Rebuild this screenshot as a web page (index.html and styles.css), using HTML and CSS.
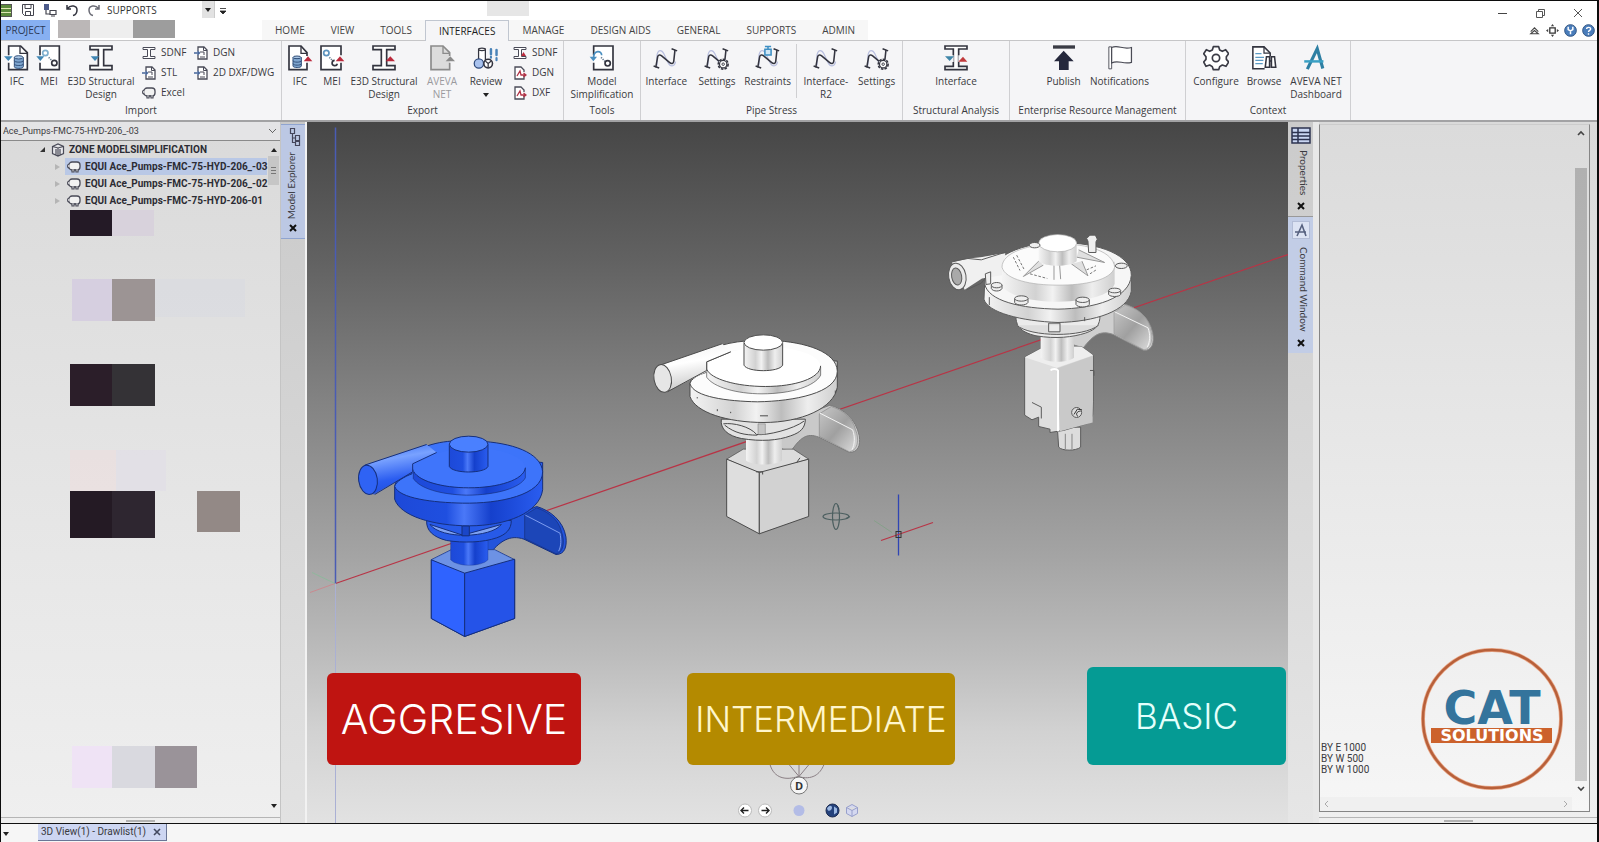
FILE: index.html
```html
<!DOCTYPE html>
<html lang="en">
<head>
<meta charset="utf-8">
<title>3D View(1) - Drawlist(1)</title>
<link rel="stylesheet" href="styles.css">
</head>
<body>
<svg class="sprite" aria-hidden="true">
  <defs>
    <symbol id="i-ifc-in" viewBox="0 0 78 84"><path d="M14 34V6h36l20 20v51H14V56" fill="#fff" stroke="#33343f" stroke-width="5"/><path d="M48 6v22h22" fill="none" stroke="#33343f" stroke-width="4"/><path d="M0 37h26L13 51z" fill="#3f86b4"/><path d="M31 40v28c0 7 27 7 27 0V40" fill="#7fa6cf" stroke="#33507a" stroke-width="3"/><ellipse cx="44" cy="40" rx="13" ry="5" fill="#a9c6e4" stroke="#33507a" stroke-width="3"/><path d="M31 50c0 6 27 6 27 0M31 60c0 6 27 6 27 0" fill="none" stroke="#33507a" stroke-width="3"/></symbol>
    <symbol id="i-mei-in" viewBox="0 0 78 84"><path d="M12 34V6h58v71H12V56" fill="#fff" stroke="#33343f" stroke-width="5"/><path d="M1 37h24L13 51z" fill="#3f86b4"/><circle cx="28" cy="27" r="8" fill="none" stroke="#7fb0cf" stroke-width="5"/><circle cx="55" cy="57" r="8" fill="none" stroke="#33343f" stroke-width="5"/><path d="M38 40l10 10" stroke="#6a7f93" stroke-width="5" stroke-dasharray="4 3"/></symbol>
    <symbol id="i-beam-in" viewBox="0 0 78 84"><path d="M6 6h66v11H47v48h25v12H6V65h25V17H6z" fill="#fff" stroke="#33343f" stroke-width="5"/><path d="M8 37h26L21 51z" fill="#3f86b4"/></symbol>
    <symbol id="i-ifc-out" viewBox="0 0 78 84"><path d="M60 56v21H6V6h36l18 20v10" fill="#fff" stroke="#33343f" stroke-width="5"/><path d="M42 6v22h18" fill="none" stroke="#33343f" stroke-width="4"/><path d="M50 52h26L63 37z" fill="#bb2a3c"/><path d="M18 40v26c0 6 25 6 25 0V40" fill="#7fa6cf" stroke="#33507a" stroke-width="3"/><ellipse cx="30" cy="40" rx="12" ry="4" fill="#a9c6e4" stroke="#33507a" stroke-width="3"/><path d="M18 50c0 6 25 6 25 0M18 59c0 6 25 6 25 0" fill="none" stroke="#33507a" stroke-width="3"/></symbol>
    <symbol id="i-mei-out" viewBox="0 0 78 84"><path d="M66 56v21H6V6h60v28" fill="#fff" stroke="#33343f" stroke-width="5"/><circle cx="22" cy="27" r="8" fill="none" stroke="#5e94bf" stroke-width="5"/><path d="M31 40l8 8" stroke="#6a7f93" stroke-width="5" stroke-dasharray="4 3"/><path d="M55 59a8 8 0 1 1-8-10" fill="none" stroke="#33343f" stroke-width="5"/><path d="M50 52h26L63 37z" fill="#bb2a3c"/></symbol>
    <symbol id="i-beam-out" viewBox="0 0 78 84"><path d="M6 6h66v11H47v48h25v12H6V65h25V17H6z" fill="#fff" stroke="#33343f" stroke-width="5"/><path d="M44 52h28L58 37z" fill="#bb2a3c"/></symbol>
    <symbol id="i-doc-off" viewBox="0 0 78 84"><path d="M62 56v21H6V6h36l20 20v10" fill="#dcdcdc" stroke="#8b8b8b" stroke-width="5"/><path d="M42 6v22h20" fill="none" stroke="#8b8b8b" stroke-width="4"/><path d="M50 52h28L64 37z" fill="#8b8b8b"/></symbol>
    <symbol id="i-review" viewBox="0 0 84 84"><path d="M18 54V14h22v40" fill="#fff" stroke="#33343f" stroke-width="4"/><ellipse cx="29" cy="14" rx="11" ry="4" fill="#fff" stroke="#33343f" stroke-width="4"/><circle cx="19" cy="60" r="15" fill="#a9c2ee" stroke="#2f4a7c" stroke-width="4"/><circle cx="49" cy="60" r="14" fill="#fff" stroke="#33343f" stroke-width="5"/><path d="M49 60l-9-8M49 60l10-8M49 60v13" stroke="#33343f" stroke-width="4"/><path d="M58 14v16M76 16v16" stroke="#4a83b8" stroke-width="8" stroke-linecap="round"/><path d="M58 38v3M76 42v7" stroke="#4a83b8" stroke-width="7" stroke-linecap="round"/></symbol>
    <symbol id="i-simplify" viewBox="0 0 78 84"><path d="M14 34V6h58v71H14V56" fill="#fff" stroke="#33343f" stroke-width="5"/><path d="M14 40c0-22 24-22 24-6" fill="none" stroke="#4a8fc0" stroke-width="5"/><path d="M2 38h22L13 52z" fill="#4a8fc0"/><path d="M36 40l12 12" stroke="#6a7f93" stroke-width="5" stroke-dasharray="4 3"/><circle cx="56" cy="58" r="8" fill="none" stroke="#33343f" stroke-width="5"/></symbol>
    <symbol id="i-pipe" viewBox="0 0 84 84"><path d="M13 66V32c4-20 16-16 22-4l12 26c8 18 22 18 26 0" fill="none" stroke="#b9bfe0" stroke-width="4"/><path d="M9 72l6-34c2-7 8-7 13-3l26 22c6 5 12 4 13-4l4-37" fill="none" stroke="#33343f" stroke-width="5"/><path d="M2 68l18 6M60 12l18 7" stroke="#33343f" stroke-width="5"/></symbol>
    <symbol id="i-pipe-gear" viewBox="0 0 84 84"><use href="#i-pipe"/><circle cx="62" cy="62" r="16" fill="#f4f4f6" stroke="#33343f" stroke-width="5" stroke-dasharray="8 4"/><circle cx="62" cy="62" r="12" fill="#fff" stroke="#33343f" stroke-width="4"/><circle cx="62" cy="62" r="4" fill="none" stroke="#33343f" stroke-width="3"/></symbol>
    <symbol id="i-restraint" viewBox="0 0 84 84"><use href="#i-pipe"/><path d="M32 5h20M42 5v9M32 14h20v18H32z" fill="#cfe7f7" stroke="#3d8fc4" stroke-width="5"/></symbol>
    <symbol id="i-beam-both" viewBox="0 0 78 84"><path d="M6 6h66v9H47v52h25v10H6V67h25V15H6z" fill="#fff" stroke="#33343f" stroke-width="5"/><path d="M2 34h30v20H2zM46 34h32v20H46z" fill="#f4f4f6"/><path d="M6 37h27L20 51z" fill="#3f86a8"/><path d="M46 53h27L60 38z" fill="#c03a3c"/></symbol>
    <symbol id="i-publish" viewBox="0 0 78 84"><path d="M6 4h66v10H6z" fill="#3a3b45"/><path d="M38 20l30 32H53v26H24V52H9z" fill="#25283c"/></symbol>
    <symbol id="i-flag" viewBox="0 0 84 84"><path d="M6 6h9v71H6z" fill="#fff" stroke="#4a4b55" stroke-width="3"/><path d="M15 8c22-10 34 8 64 0v48c-28 8-42-10-64 2z" fill="#fff" stroke="#4a4b55" stroke-width="4"/></symbol>
    <symbol id="i-gear" viewBox="0 0 78 84"><path d="M31 8h16l3 10 8 4 10-5 9 12-7 9v8l7 8-8 13-11-4-8 5-3 9H31l-3-9-8-5-11 4-7-13 7-8v-8l-7-9 8-12 10 5 8-4z" fill="#fff" stroke="#3a3b45" stroke-width="5" stroke-linejoin="round"/><circle cx="39" cy="42" r="11" fill="#fff" stroke="#3a3b45" stroke-width="5"/></symbol>
    <symbol id="i-browse" viewBox="0 0 84 84"><path d="M44 77H6V6h36l20 20v10" fill="#fff" stroke="#33343f" stroke-width="5"/><path d="M42 6v20h20" fill="none" stroke="#33343f" stroke-width="4"/><path d="M14 28h20M14 40h28M14 50h26M14 60h24" stroke="#5b9ac4" stroke-width="4"/><path d="M46 72l4-34h10v34zM80 72l-4-34H66v34zM60 52h6" fill="#fff" stroke="#33343f" stroke-width="5"/></symbol>
    <symbol id="i-aveva" viewBox="0 0 84 84"><path d="M14 78L46 12l18 64" fill="none" stroke="#2e7fa3" stroke-width="10"/><path d="M4 53h62" stroke="#3aa0c4" stroke-width="8"/></symbol>
    <symbol id="i-s-beam" viewBox="0 0 14 14"><path d="M1 1.500h12v2H8.500v7H13v2H1v-2h4.500v-7H1z" fill="#fff" stroke="#4a4b58"/></symbol>
    <symbol id="i-s-beam-out" viewBox="0 0 14 14"><use href="#i-s-beam"/><path d="M8 10h5l-2.500-4z" fill="#bb2a3c"/></symbol>
    <symbol id="i-s-doc" viewBox="0 0 14 14"><path d="M4 5V1h6l3 3v9H4V9" fill="#fff" stroke="#4a4b58" stroke-width="1.300"/><path d="M9.500 1v3.500H13M6 11h5M6 6h4v3" fill="none" stroke="#4a4b58"/><path d="M0 7h5M3.500 5l2 2-2 2" fill="none" stroke="#46659a" stroke-width="1.300"/></symbol>
    <symbol id="i-s-doc-out" viewBox="0 0 14 14"><path d="M11 9v4H2V1h6l3 3v2" fill="#fff" stroke="#4a4b58" stroke-width="1.300"/><path d="M4 10l3-5 1 4h5M10.500 7l2.500 2-2.500 2" fill="none" stroke="#b23448" stroke-width="1.300"/></symbol>
    <symbol id="i-equip" viewBox="0 0 14 14"><rect x="2" y="2" width="11" height="8" rx="3" fill="#f2f2f2" stroke="#4a4b58" stroke-width="1.300"/><path d="M2.500 4C0 4 0 8 2.500 8M5 9v3h2V9M9 9v3h2V9" fill="#fff" stroke="#4a4b58" stroke-width="1.200"/></symbol>
    <symbol id="i-zone" viewBox="0 0 14 14"><path d="M1.500 3.500L7 1l5.500 2.500v7L7 13l-5.500-2.500zM1.500 3.500L7 5l5.500-1.500M5 6v6M7 5v8M9 6v6" fill="#e8e8ec" stroke="#4a4b58" stroke-width="1.200"/></symbol>
  </defs>
</svg>

<div class="app">
  <header class="titlebar">
    <span class="app-mark"></span>
    <div class="quick">
      <button class="tool" aria-label="Save"><svg viewBox="0 0 14 14"><path d="M1.500 1.500h11v11h-9l-2-2zM4 1.500v4h6v-4M4.500 12.500v-4h5v4" fill="#fff" stroke="#44454f"/></svg></button>
      <button class="tool" aria-label="Get work"><svg viewBox="0 0 14 14"><path d="M1 1h5v6H1z" fill="#4c5a8a" /><path d="M3 7v4h4M7 7.500h6v4H7zM8 13h4" fill="none" stroke="#44454f" stroke-width="1.200"/></svg></button>
      <button class="tool" aria-label="Undo"><svg viewBox="0 0 14 14"><path d="M2 2v4h4M2.500 5.500C6 1 12 3 12 7c0 3-2 5-4 5.500" fill="none" stroke="#33343f" stroke-width="1.500"/></svg></button>
      <button class="tool" aria-label="Redo"><svg viewBox="0 0 14 14"><path d="M12 2v4H8M11.500 5.500C8 1 2 3 2 7c0 3 2 5 4 5.500" fill="none" stroke="#6a6b75" stroke-width="1.500"/></svg></button>
    </div>
    <label class="module-box"><select class="module" aria-label="Module"><option>SUPPORTS</option></select><i class="down"></i></label>
    <button class="customise" aria-label="Customise toolbar"><svg viewBox="0 0 8 8"><path d="M1 1.500h6M1 4h6L4 7z" fill="#222" stroke="#222" stroke-width=".8"/></svg></button>
    <span class="title-block"></span>
    <div class="window-buttons">
      <button aria-label="Minimise"><svg viewBox="0 0 12 12"><path d="M2 6.500h9" stroke="#444"/></svg></button>
      <button aria-label="Restore"><svg viewBox="0 0 12 12"><path d="M2.500 4.500h6v6h-6zM4.500 4V2.500h6v6H9" fill="none" stroke="#555"/></svg></button>
      <button aria-label="Close"><svg viewBox="0 0 12 12"><path d="M2 2l8 8M10 2l-8 8" stroke="#555"/></svg></button>
    </div>
  </header>

  <nav class="tabs">
    <button class="tab project">PROJECT</button>
    <div class="tab-blocks"><span class="tb1"></span><span class="tb2"></span><span class="tb3"></span></div>
    <div class="tab-list">
      <button class="tab">HOME</button>
      <button class="tab">VIEW</button>
      <button class="tab">TOOLS</button>
      <button class="tab active">INTERFACES</button>
      <button class="tab">MANAGE</button>
      <button class="tab">DESIGN AIDS</button>
      <button class="tab">GENERAL</button>
      <button class="tab">SUPPORTS</button>
      <button class="tab">ADMIN</button>
    </div>
    <div class="tab-tools">
      <button aria-label="Collapse ribbon"><svg viewBox="0 0 12 12"><path d="M2.500 7L6 3.500 9.500 7M2.500 9h7L6 6z" fill="none" stroke="#444"/></svg></button>
      <button aria-label="Full screen"><svg viewBox="0 0 12 12"><path d="M3.500 3.500h5v5h-5z" fill="none" stroke="#333" stroke-width="1.200"/><path d="M6 0l1.500 2h-3zM6 12l1.500-2h-3zM0 6l2-1.500v3zM12 6l-2-1.500v3z" fill="#444"/></svg></button>
      <button aria-label="Options"><svg viewBox="0 0 14 14"><circle cx="7" cy="7" r="6.300" fill="#4a7dbb" stroke="#2e5280"/><path d="M4.500 3v3L7 7.500 9.500 6V3M7 7v4" fill="none" stroke="#fff" stroke-width="1.600"/></svg></button>
      <button aria-label="Help"><svg viewBox="0 0 14 14"><circle cx="7" cy="7" r="6.300" fill="#4a7dbb" stroke="#2e5280"/><path d="M5 5.500C5 3 9.500 3 9.300 5.500 9 7 7 6.800 7 8.500M7 10v1.500" fill="none" stroke="#fff" stroke-width="1.500"/></svg></button>
    </div>
  </nav>

  <section class="ribbon">
    <div class="group g-import">
      <div class="items">
        <button class="big"><svg><use href="#i-ifc-in"/></svg>IFC</button>
        <button class="big"><svg><use href="#i-mei-in"/></svg>MEI</button>
        <button class="big wide"><svg><use href="#i-beam-in"/></svg>E3D Structural<br>Design</button>
        <div class="smalls">
          <button class="small"><svg><use href="#i-s-beam"/></svg>SDNF</button>
          <button class="small"><svg><use href="#i-s-doc"/></svg>STL</button>
          <button class="small"><svg><use href="#i-equip"/></svg>Excel</button>
        </div>
        <div class="smalls">
          <button class="small"><svg><use href="#i-s-doc"/></svg>DGN</button>
          <button class="small"><svg><use href="#i-s-doc"/></svg>2D DXF/DWG</button>
        </div>
      </div>
      <p class="caption">Import</p>
    </div>
    <div class="group g-export">
      <div class="items">
        <button class="big"><svg><use href="#i-ifc-out"/></svg>IFC</button>
        <button class="big"><svg><use href="#i-mei-out"/></svg>MEI</button>
        <button class="big wide"><svg><use href="#i-beam-out"/></svg>E3D Structural<br>Design</button>
        <button class="big mid" disabled><svg><use href="#i-doc-off"/></svg>AVEVA<br>NET</button>
        <button class="big mid"><svg><use href="#i-review"/></svg>Review<i class="arrow"></i></button>
        <div class="smalls">
          <button class="small"><svg><use href="#i-s-beam-out"/></svg>SDNF</button>
          <button class="small"><svg><use href="#i-s-doc-out"/></svg>DGN</button>
          <button class="small"><svg><use href="#i-s-doc-out"/></svg>DXF</button>
        </div>
      </div>
      <p class="caption">Export</p>
    </div>
    <div class="group g-tools">
      <div class="items centred">
        <button class="big wide"><svg><use href="#i-simplify"/></svg>Model<br>Simplification</button>
      </div>
      <p class="caption">Tools</p>
    </div>
    <div class="group g-pipe">
      <div class="items">
        <button class="big mid"><svg><use href="#i-pipe"/></svg>Interface</button>
        <button class="big mid"><svg><use href="#i-pipe-gear"/></svg>Settings</button>
        <button class="big mid"><svg><use href="#i-restraint"/></svg>Restraints</button>
        <span class="rule"></span>
        <button class="big mid"><svg><use href="#i-pipe"/></svg>Interface-<br>R2</button>
        <button class="big mid"><svg><use href="#i-pipe-gear"/></svg>Settings</button>
      </div>
      <p class="caption">Pipe Stress</p>
    </div>
    <div class="group g-struct">
      <div class="items centred">
        <button class="big mid"><svg><use href="#i-beam-both"/></svg>Interface</button>
      </div>
      <p class="caption">Structural Analysis</p>
    </div>
    <div class="group g-erm">
      <div class="items centred">
        <button class="big roomy"><svg><use href="#i-publish"/></svg>Publish</button>
        <button class="big broad"><svg><use href="#i-flag"/></svg>Notifications</button>
      </div>
      <p class="caption">Enterprise Resource Management</p>
    </div>
    <div class="group g-context">
      <div class="items centred">
        <button class="big roomy"><svg><use href="#i-gear"/></svg>Configure</button>
        <button class="big mid"><svg><use href="#i-browse"/></svg>Browse</button>
        <button class="big broad"><svg><use href="#i-aveva"/></svg>AVEVA NET<br>Dashboard</button>
      </div>
      <p class="caption">Context</p>
    </div>
  </section>

  <main class="body">
    <aside class="explorer">
      <select class="address" aria-label="Current element"><option>Ace_Pumps-FMC-75-HYD-206_-03</option></select>
      <div class="tree-area">
        <svg class="mosaic" aria-hidden="true">
          <rect x="69" y="69" width="42" height="26" fill="#241a26"/><rect x="111" y="69" width="42" height="26" fill="#d8d2dc"/>
          <rect x="71" y="138" width="40" height="42" fill="#d6cfe0"/><rect x="111" y="138" width="43" height="42" fill="#9c9494"/><rect x="154" y="138" width="90" height="38" fill="#d9dae1" opacity=".6"/>
          <rect x="69" y="223" width="42" height="42" fill="#2b1e29"/><rect x="111" y="223" width="43" height="42" fill="#343236"/>
          <rect x="69" y="309" width="46" height="41" fill="#ecdedd" opacity=".6"/><rect x="115" y="309" width="50" height="41" fill="#e0dce8" opacity=".5"/>
          <rect x="69" y="350" width="42" height="47" fill="#241a24"/><rect x="111" y="350" width="43" height="47" fill="#2e2630"/><rect x="196" y="350" width="43" height="41" fill="#938986"/>
          <rect x="71" y="605" width="40" height="42" fill="#efe3f5"/><rect x="111" y="605" width="43" height="42" fill="#d9d9df"/><rect x="154" y="605" width="42" height="42" fill="#9a9399"/>
        </svg>
        <ul class="tree">
          <li class="zone"><span class="open"></span><svg><use href="#i-zone"/></svg><span>ZONE MODELSIMPLIFICATION</span></li>
          <li class="selected"><span class="shut"></span><svg><use href="#i-equip"/></svg><span>EQUI Ace_Pumps-FMC-75-HYD-206_-03</span></li>
          <li><span class="shut"></span><svg><use href="#i-equip"/></svg><span>EQUI Ace_Pumps-FMC-75-HYD-206_-02</span></li>
          <li><span class="shut"></span><svg><use href="#i-equip"/></svg><span>EQUI Ace_Pumps-FMC-75-HYD-206-01</span></li>
        </ul>
        <div class="tree-scroll"><i class="up"></i><span class="thumb"></span><i class="down"></i></div>
      </div>
      <div class="grip"><span></span></div>
    </aside>

    <div class="strip left">
      <div class="side-tab explorer-tab">
        <svg class="tab-icon" viewBox="0 0 12 20"><path d="M1.500 1.500h4v5h-4zM3.500 6.500v9h3M3.500 11h3M6.500 8.500h4v5h-4zM6.500 14.500h4v4h-4z" fill="none" stroke="#44455a" stroke-width="1.200"/></svg>
        <span class="up-text">Model Explorer</span>
        <button class="x" aria-label="Close Model Explorer"><svg viewBox="0 0 8 8"><path d="M1 1l6 6M7 1L1 7" stroke="#111" stroke-width="2"/></svg></button>
      </div>
    </div>

    <section class="viewport">
      <svg class="scene" viewBox="307 121 981 702" preserveAspectRatio="xMidYMid slice" role="img" aria-label="Three pump models">
        <defs>
          <linearGradient id="bg" x1="0" y1="0" x2="0" y2="1"><stop offset="0" stop-color="#464646"/><stop offset=".2" stop-color="#626262"/><stop offset=".4" stop-color="#838383"/><stop offset=".62" stop-color="#a4a4a4"/><stop offset=".76" stop-color="#bcbcbc"/><stop offset=".87" stop-color="#d2d2d2"/><stop offset="1" stop-color="#e2e2e2"/></linearGradient>
          <linearGradient id="b-side"><stop offset="0" stop-color="#1d49d8"/><stop offset=".35" stop-color="#1f4fe0"/><stop offset=".47" stop-color="#4a78f8"/><stop offset=".65" stop-color="#1540cc"/><stop offset="1" stop-color="#2a5df0"/></linearGradient>
          <linearGradient id="b-pipe" x1="0" y1="0" x2=".25" y2="1"><stop offset="0" stop-color="#2f66f0"/><stop offset=".35" stop-color="#79a2ff"/><stop offset=".75" stop-color="#2a5cf0"/><stop offset="1" stop-color="#1f4fe0"/></linearGradient>
          <linearGradient id="w-side"><stop offset="0" stop-color="#f4f4f4"/><stop offset=".3" stop-color="#d2d2d2"/><stop offset=".45" stop-color="#f2f2f2"/><stop offset=".62" stop-color="#bdbdbd"/><stop offset=".8" stop-color="#eee"/><stop offset="1" stop-color="#cfcfcf"/></linearGradient>
          <linearGradient id="w-pipe" x1="0" y1="0" x2=".25" y2="1"><stop offset="0" stop-color="#f0f0f0"/><stop offset=".45" stop-color="#fff"/><stop offset="1" stop-color="#c8c8c8"/></linearGradient>
          <linearGradient id="w-plate" x1="0" y1="0" x2="1" y2="1"><stop offset="0" stop-color="#c8c8c8"/><stop offset=".5" stop-color="#a0a0a0"/><stop offset="1" stop-color="#dedede"/></linearGradient>
        </defs>
        <rect x="307" y="121" width="981" height="702" fill="url(#bg)"/>
        <path d="M335.500 583L1288 254" stroke="#b83446" stroke-width="1.200"/>
        <path d="M310 592l25-9" stroke="#c98a90"/><path d="M312 572l23 11" stroke="#8fb89c"/>
        <path d="M335.500 127V583" stroke="#4a5cb4" stroke-width="1.500"/><path d="M335.500 583V823" stroke="#aab0d4"/>

        <g transform="translate(320 400) scale(.3333)" stroke="#152f7c" stroke-width="3" stroke-linejoin="round">
          <path d="M500 380L650 318C690 330 730 360 738 410C741 440 734 462 708 462L612 416C570 402 540 420 504 466L480 440Z" fill="#2354dc"/>
          <path d="M614 344L650 322C686 334 716 358 724 392C736 424 730 458 708 460L614 414Z" fill="#1c46b8" stroke-width="2"/>
          <path d="M616 344l104 54c4 20 4 38-4 54" fill="none" stroke="#7d9df0"/>
          <path d="M334 478l60-30h130l60 30v176l-150 54-100-54z" fill="#2b5cf2"/>
          <path d="M334 478l60-30h130l60 30-150 48z" fill="#6d92e4" stroke-width="1"/>
          <path d="M334 478l100 40v190l-100-54z" fill="#2f63ff"/><path d="M434 518l150-42v178l-150 54z" fill="#2553e8"/>
          <path d="M392 420h112v58c-20 22-92 22-112 0z" fill="url(#b-side)" stroke-width="1"/>
          <path d="M320 360c-2 30 20 50 60 60 50 8 110 6 150-8 28-10 44-25 44-52z" fill="#275ae8"/>
          <path d="M330 372l98 32 116-32c-30 40-180 46-214 0z" fill="#7fa2f2"/><path d="M426 376h22v30h-22z" fill="#1a46c8"/>
          <path d="M224 258c2-14 10-24 22-32l160-60 262 20v82c-10 70-110 108-220 108-110 0-208-30-224-80z" fill="url(#b-side)"/>
          <path d="M224 258c2-14 30-30 52-38l-2-60c60-40 130-42 200-38 100 4 190 34 194 92 0 70-130 96-240 94-90-2-190-14-204-50z" fill="#3d74fa"/>
          <path d="M280 206v28c20 30 80 48 160 50 90 0 160-22 176-52v-30z" fill="url(#b-side)" stroke-width="2"/>
          <path d="M278 206c2-30 30-42 70-46l60-16c100-10 206 16 208 58-4 40-90 60-170 60-90-2-160-26-168-56z" fill="#3f75fb" stroke="none"/>
          <path d="M278 206c10 36 90 56 168 56 90 0 166-24 170-60" fill="none"/>
          <path d="M134 194l186-62 30 24-70 34v24l-120 68z" fill="url(#b-pipe)" stroke="none"/><path d="M134 194l186-62M350 156l-72 34v24l-114 68" fill="none"/>
          <ellipse cx="144" cy="238" rx="28" ry="44" fill="#2f63f4" transform="rotate(-8 144 238)"/>
          <path d="M388 132v66c10 22 106 22 116 0v-66z" fill="url(#b-side)"/><ellipse cx="446" cy="131" rx="58" ry="24" fill="#4a80ff"/>
        </g>

        <g transform="translate(630 310) scale(.3333)" stroke="#4a4a4a" stroke-width="3" stroke-linejoin="round">
          <path d="M450 340L600 284C640 294 678 326 688 376C692 406 684 426 658 426L566 380C530 366 510 382 482 424L440 410Z" fill="#c9c9c9" stroke="#7a7a7a"/>
          <path d="M568 310L604 288C640 300 668 322 676 356C690 388 682 422 658 424L568 378Z" fill="url(#w-plate)" stroke="#888" stroke-width="2"/>
          <path d="M570 308l98 50c8 22 6 44-2 60" fill="none" stroke="#f4f4f4"/>
          <path d="M290 446l50-30h150l46 30-146 44z" fill="#dcdcdc" stroke-width="2"/>
          <path d="M290 446l98 40v184l-98-52z" fill="#dedede"/><path d="M388 486l148-40v172l-148 52z" fill="#d2d2d2"/>
          <path d="M378 484h20v8M500 456l10-14" fill="none"/>
          <path d="M348 380h108v70c-20 16-88 16-108 0z" fill="url(#w-side)" stroke="none"/>
          <path d="M274 326c-4 30 20 50 60 58 60 10 110 6 148-8 30-10 44-24 44-50z" fill="#e2e2e2"/>
          <path d="M280 340c30-4 80 8 100 32 30 4 110-16 142-40M284 344c30 24 60 30 98 30" fill="none"/><path d="M384 340h22v32h-22z" fill="#c4c4c4" stroke-width="1"/>
          <path d="M180 220c2-14 10-22 22-28l160-60 260 20v78c-10 64-110 106-220 106-110 0-206-30-222-78z" fill="url(#w-side)"/>
          <path d="M180 220c2-14 22-26 48-34l-2-62c60-32 130-36 200-34 100 4 194 34 196 92 0 66-130 90-240 92-90-2-190-14-202-54z" fill="#fcfcfc"/>
          <path d="M230 180v20c20 30 90 50 166 50 90 0 160-24 176-56v-24z" fill="url(#w-side)" stroke-width="2"/>
          <path d="M230 154c10-6 60-16 72-30l60-12c110-10 206 16 210 56-4 36-84 60-166 60-90 0-166-24-176-52z" fill="#fff" stroke="none"/>
          <path d="M302 124l-72 30v22c12 30 90 52 176 52 90 0 164-24 166-62" fill="none"/>
          <path d="M90 164l186-64 26 24-72 30v30l-120 60z" fill="url(#w-pipe)" stroke="none"/><path d="M90 164l186-64M302 124l-72 30v26l-118 64" fill="none"/>
          <ellipse cx="98" cy="204" rx="26" ry="42" fill="#e6e6e6" transform="rotate(-10 98 204)"/>
          <path d="M342 98v66c10 22 106 22 116 0V98z" fill="url(#w-side)"/><ellipse cx="400" cy="96" rx="58" ry="23" fill="#fff"/>
          <path d="M262 296v6M302 304v4M390 316h24M616 240v8M200 262h4" stroke-width="3"/>
        </g>

        <g transform="translate(920 210) scale(.3333)" stroke="#5a5a5a" stroke-width="3" stroke-linejoin="round">
          <path d="M460 340L610 280C650 290 688 320 698 366C704 398 696 420 672 420L580 372C540 358 520 374 490 412L450 400Z" fill="#cfcfcf" stroke="#8a8a8a"/>
          <path d="M582 306L616 284C652 296 682 316 690 350C702 382 694 416 672 418L582 370Z" fill="url(#w-plate)" stroke="#999" stroke-width="2"/>
          <path d="M584 304l100 48c8 22 6 42-2 58" fill="none" stroke="#f4f4f4"/>
          <path d="M412 650h70v60c-14 12-56 12-66 0z" fill="#dcdcdc"/><path d="M436 670v46M456 670v46" stroke-width="2"/>
          <path d="M314 440l60-32h110l36 26v140l-2 40-12 24-76 22-40 6v-10l-34-8v-28l-20 8-22-14z" fill="#dedede"/>
          <path d="M314 440l60-32h110l36 26-110 38z" fill="#eee" stroke="none"/><path d="M410 474l108-38v200l-98 26z" fill="#c9c9c9" stroke="none"/><path d="M392 480c4-6 18-6 22 0v182" fill="none" stroke="#fff" stroke-width="6"/>
          <path d="M336 576l28 14v34M510 480h12v16" fill="none"/><circle cx="470" cy="606" r="15" fill="#ddd"/><path d="M462 612l10-16 14 2M474 618c-8-6-4-16 8-16" fill="none" stroke="#333"/>
          <path d="M362 370h100v72c-20 16-80 16-100 0z" fill="url(#w-side)" stroke="none"/>
          <path d="M288 310c-2 34 10 54 60 66 60 10 110 4 148-8 34-12 44-24 44-54z" fill="#ebebeb"/><path d="M290 344c40 36 200 38 246 0M386 338h34v26h-34z" fill="#ddd"/>
          <path d="M194 216c10-60 80-110 200-120 140 0 236 30 240 96v50c-10 60-110 92-220 94-110-4-212-30-222-70z" fill="url(#w-side)"/>
          <path d="M194 220c0-66 90-124 220-124 130 0 220 40 220 98-4 70-110 100-220 102-110-2-210-24-220-76z" fill="#f6f6f6"/>
          <path d="M96 156l48-12c60-4 80-14 112-16l-10 66-60 10-52 34z" fill="#f0f0f0" stroke="none"/><path d="M100 152l44-8 40 4 76-24M140 238l44-20 20-26" fill="none"/>
          <ellipse cx="112" cy="198" rx="26" ry="40" fill="#eaeaea" transform="rotate(-10 112 198)"/><ellipse cx="110" cy="198" rx="15" ry="26" fill="#a9a9a9" transform="rotate(-10 110 198)"/>
          <path d="M246 164v64c30 34 100 46 170 46 90-2 158-20 168-54v-66z" fill="url(#w-side)" stroke="none"/>
          <path d="M246 170c0-44 80-70 170-70 90 0 164 24 168 70-10 40-90 54-170 54-80 0-158-16-168-54z" fill="#fbfbfb" stroke="#aaa" stroke-width="2"/>
          <path d="M358 150l-48 48 60-34M470 140l84 16-78-38M402 150v58M418 150l4 56M454 160l50 36-18-44" fill="#e0e0e0" stroke="#999"/>
          <path d="M280 140l20 40M290 134l22 42M330 190l52 14M500 178l28-12M510 190l22-14" stroke="#777" stroke-dasharray="8 5"/>
          <path d="M356 100v52c20 18 92 18 114 0V96z" fill="url(#w-side)" stroke="none"/><ellipse cx="413" cy="98" rx="57" ry="26" fill="#fff" stroke="#aaa" stroke-width="2"/>
          <g fill="#eee"><path d="M214 224v10c4 10 28 10 32 0v-10M284 264v12c4 10 36 10 40 0v-12M468 268v14c4 10 36 10 40 0v-14M566 240v12c4 8 32 8 36 0v-12"/><ellipse cx="230" cy="224" rx="16" ry="8"/><ellipse cx="304" cy="264" rx="20" ry="8"/><ellipse cx="488" cy="268" rx="20" ry="8"/><ellipse cx="584" cy="240" rx="18" ry="7"/><ellipse cx="604" cy="166" rx="18" ry="8"/><ellipse cx="344" cy="104" rx="16" ry="8"/><path d="M504 92l-4-8 10-10 16 0 6 12-4 8v32h-22zM196 190l16-6v36l-14 2z"/></g>
          <path d="M208 260v24M494 320v12" fill="none"/>
        </g>

        <g fill="none" stroke="#4c5f60" stroke-width="1.200"><ellipse cx="836" cy="516" rx="13" ry="3.500"/><ellipse cx="836" cy="516" rx="3.500" ry="13"/><path d="M846 518l4-2M838 505l1 4"/></g>
        <path d="M898.500 494v61" stroke="#2f45b4" stroke-width="1.300"/><path d="M881 540l52-18" stroke="#b83446" stroke-width="1.300"/><path d="M874 520l18 12" stroke="#86a08a"/><rect x="896" y="531" width="5" height="6" fill="none" stroke="#333"/>

        <g fill="none" stroke="#8a7f84"><path d="M770 764c4 14 16 16 28 12 14 4 22-2 26-12M799 776V764M799 776l-10-12M799 776l10-12"/></g>
        <circle cx="799" cy="785" r="8.500" fill="#f6f6f6" stroke="#777"/><text class="compass" x="799" y="789" text-anchor="middle">D</text>
        <g stroke="#bbb" fill="#fff"><circle cx="745" cy="810" r="6.500"/><circle cx="765" cy="810" r="6.500"/></g>
        <path d="M748.500 810h-7M744 807l-3 3 3 3M761.500 810h7M766 807l3 3-3 3" fill="none" stroke="#222" stroke-width="1.400"/>
        <circle cx="799" cy="810" r="5.500" fill="#b3bce6"/>
        <circle cx="832.500" cy="810" r="6.500" fill="#24427c" stroke="#1a2a50"/><path d="M827 808c2-4 5-3 5-1s-2 4-4 3zM834 806l3 2v4l-3 2z" fill="#9cb8e2"/>
        <path d="M846.500 807l5.500-3 5.500 3v6l-5.500 3-5.500-3zM846.500 807l5.500 3 5.500-3M852 810v6" fill="#d4d8f0" stroke="#98a0cc"/>
      </svg>
      <div class="card red">AGGRESIVE</div>
      <div class="card gold">INTERMEDIATE</div>
      <div class="card teal">BASIC</div>
    </section>

    <div class="strip right">
      <div class="side-tab properties-tab">
        <svg class="table-icon" viewBox="0 0 20 17"><path d="M1 1h18v15H1zM1 5.500h18M1 9h18M1 12.500h18M7 1v15" fill="#c9d6f2" stroke="#2c3350" stroke-width="1.500"/></svg>
        <span class="down-text">Properties</span>
        <button class="x" aria-label="Close Properties"><svg viewBox="0 0 8 8"><path d="M1 1l6 6M7 1L1 7" stroke="#111" stroke-width="2"/></svg></button>
      </div>
      <div class="side-tab command-tab">
        <svg class="a-icon" viewBox="0 0 18 18"><rect x=".5" y=".5" width="17" height="17" fill="#dce3f3" stroke="#b3bdd6"/><path d="M5 15l5-11 4 11M3 11h11" fill="none" stroke="#56617f" stroke-width="1.600"/></svg>
        <span class="down-text">Command Window</span>
        <button class="x" aria-label="Close Command Window"><svg viewBox="0 0 8 8"><path d="M1 1l6 6M7 1L1 7" stroke="#111" stroke-width="2"/></svg></button>
      </div>
    </div>

    <aside class="command">
      <div class="console">
        <div class="console-main">
          <div class="console-text"><p>BY E 1000</p><p>BY W 500</p><p>BY W 1000</p></div>
          <div class="v-scroll"><svg viewBox="0 0 8 8"><path d="M1 6l3-3 3 3" fill="none" stroke="#444" stroke-width="1.600"/></svg><span></span><svg viewBox="0 0 8 8"><path d="M1 2l3 3 3-3" fill="none" stroke="#444" stroke-width="1.600"/></svg></div>
        </div>
        <div class="h-scroll"><svg viewBox="0 0 8 8"><path d="M5 1L2 4l3 3" fill="none" stroke="#aaa"/></svg><svg viewBox="0 0 8 8"><path d="M3 1l3 3-3 3" fill="none" stroke="#aaa"/></svg></div>
        <svg class="logo" viewBox="0 0 142 142" role="img" aria-label="CAT Solutions">
          <circle cx="71" cy="71" r="69" fill="none" stroke="#e9a98a" stroke-width="4"/><circle cx="71" cy="71" r="69" fill="none" stroke="#b8603a" stroke-width="2.500"/>
          <text class="logo-cat" x="71" y="76" text-anchor="middle">CAT</text>
          <rect x="10" y="80" width="121" height="15" fill="#cc622c"/>
          <text class="logo-sub" x="71" y="93" text-anchor="middle">SOLUTIONS</text>
        </svg>
      </div>
      <div class="grip"><span></span></div>
    </aside>
  </main>

  <footer class="status">
    <button class="doc-menu" aria-label="Open documents"><i class="down"></i></button>
    <div class="doc-tab"><span>3D View(1) - Drawlist(1)</span><button class="x" aria-label="Close view"><svg viewBox="0 0 8 8"><path d="M1 1l6 6M7 1L1 7" stroke="#444a60" stroke-width="1.600"/></svg></button></div>
  </footer>
</div>
</body>
</html>
```

FILE: styles.css
```css
* { box-sizing: border-box; }
body, p, ul { margin: 0; padding: 0; }
body {
  font: 10px/13px "Open Sans", "Noto Sans", sans-serif;
  color: #3a3a40;
  background: #f4f4f4;
}
button {
  font: inherit;
  color: inherit;
  background: none;
  border: 0;
  padding: 0;
  margin: 0;
}
svg { display: block; flex: none; }
.sprite { position: absolute; width: 0; height: 0; }

.app {
  display: flex;
  flex-direction: column;
  height: 100vh;
  border: solid #0c0c0c;
  border-width: 1px 2px 0 1px;
  overflow: hidden;
}

/* title bar */
.titlebar { display: flex; align-items: flex-start; flex: none; height: 19px; background: #fff; }
.app-mark {
  width: 11px; height: 13px; margin-top: 3px;
  background: repeating-linear-gradient(#5d8a3c 0 3px, #dfe8b4 3px 4px);
  border: 1px solid #555;
  border-left: 0;
}
.quick { display: flex; gap: 8px; padding: 2px 0 0 9px; }
.tool svg { width: 14px; height: 14px; }
.module-box {
  display: flex; align-items: center;
  height: 17px; margin-left: 2px; padding-right: 3px;
  border-right: 1px solid #ccc;
  background: linear-gradient(#e2e2e2, #e2e2e2) right / 12px 100% no-repeat;
}
.module {
  appearance: none;
  width: 102px; height: 17px; padding: 0 0 0 4px;
  border: 0; background: none;
  font: 10px/16px "Open Sans", sans-serif; color: #333;
}
.customise { padding: 6px 0 0 4px; }
.customise svg { width: 8px; height: 8px; }
.title-block { width: 42px; height: 15px; margin-left: 260px; background: #e6e6e6; }
.window-buttons { display: flex; gap: 26px; margin: 6px 13px 0 auto; }
.window-buttons svg { width: 12px; height: 12px; }

/* tabs */
.tabs { display: flex; flex: none; height: 21px; background: #fff; border-bottom: 1px solid #c6c6c8; }
.tab { padding: 0 13px; line-height: 20px; color: #444; }
.tab.project { width: 49px; background: #87b0f2; color: #2c3a58; padding: 0; }
.tab-blocks { display: flex; height: 18px; margin: 0 87px 0 8px; }
.tb1 { width: 32px; background: #bbb7b7; }
.tb2 { width: 43px; background: #eeeeee; }
.tb3 { width: 42px; background: #9d9d9d; }
.tab-list { display: flex; background: #f7f7f7; }
.tab-list .active {
  height: 21px;
  border: 1px solid #c0c6d0; border-bottom: 0;
  background: #f5f5f7; color: #1d1d22;
}
.tab-tools { display: flex; align-items: center; gap: 5px; margin: 0 2px 0 auto; }
.tab-tools svg { width: 13px; height: 13px; }

/* ribbon */
.ribbon { display: flex; flex: none; height: 81px; background: #f5f5f7; border-bottom: 2px solid #a2a2a4; }
.group { display: flex; flex-direction: column; border-right: 1px solid #cfcfd2; }
.items { display: flex; flex: 1; padding-top: 3px; }
.centred { justify-content: center; }
.caption { line-height: 14px; padding-bottom: 3px; text-align: center; white-space: nowrap; }
.big { display: flex; flex-direction: column; align-items: center; width: 32px; height: 57px; line-height: 13px; white-space: nowrap; }
.big svg { width: 26px; height: 28px; margin-bottom: 3px; }
.big:disabled { color: #9a9a9e; }
.big.wide { width: 72px; }
.big.broad { width: 60px; }
.big.roomy { width: 52px; }
.big.mid { width: 44px; }
.g-import { width: 281px; }
.g-export { width: 282px; }
.g-export .items { padding-left: 2px; }
.g-tools { width: 77px; }
.g-pipe { width: 262px; }
.g-pipe .items { justify-content: space-around; }
.g-struct { width: 107px; }
.g-erm { width: 176px; }
.g-erm .items { padding-right: 8px; }
.g-context { width: 165px; }
.rule { width: 1px; height: 54px; background: #cfcfd2; }
.smalls { display: flex; flex-direction: column; gap: 7px; padding: 2px 0 0 5px; min-width: 52px; }
.small { display: flex; align-items: center; gap: 5px; height: 13px; white-space: nowrap; }
.small svg { width: 14px; height: 14px; }
.arrow, .down, .up { display: block; width: 0; height: 0; border: solid transparent; border-width: 0 3px; }
.arrow, .down { border-top: 4px solid #222; }
.up { border-bottom: 4px solid #222; }
.arrow { margin-top: 5px; }

/* body */
.body { display: flex; flex: 1; min-height: 0; background: linear-gradient(#dadada, #efefef); }
.explorer { display: flex; flex-direction: column; width: 280px; border-right: 1px solid #c4c4c4; }
.address {
  appearance: none;
  height: 19px; padding: 0 2px;
  border: 0; border-bottom: 1px solid #8a8a8a; border-radius: 0;
  font: 9px/17px Roboto, "Open Sans", sans-serif; color: #3a3a40;
  background: linear-gradient(45deg, transparent 46%, #666 46% 60%, transparent 60%) 268px 7px / 4px 4px no-repeat,
    linear-gradient(-45deg, transparent 46%, #666 46% 60%, transparent 60%) 271px 7px / 4px 4px no-repeat, #e4e4e6;
}
.tree-area { position: relative; display: flex; flex: 1; justify-content: space-between; }
.mosaic { position: absolute; inset: 0; width: 100%; height: 100%; }
.tree { position: relative; list-style: none; font-family: Roboto, "Open Sans", sans-serif; font-weight: 700; color: #2c2c34; }
.tree li { display: flex; align-items: center; height: 17px; padding-left: 54px; white-space: nowrap; }
.tree li svg { width: 14px; height: 14px; margin: 0 4px 0 3px; }
.tree .zone { padding-left: 39px; }
.tree .selected { background: linear-gradient(90deg, transparent 64px, #b9c8e6 64px); }
.open { width: 0; height: 0; border-left: 5px solid transparent; border-bottom: 5px solid #333; margin-right: 3px; }
.shut { width: 0; height: 0; border: solid transparent; border-width: 3px 0 3px 5px; border-left-color: #b5b5b5; margin-right: 4px; }
.tree-scroll { position: relative; display: flex; flex-direction: column; align-items: center; flex: none; width: 13px; padding: 7px 0 9px; margin-right: 1px; }
.tree-scroll .thumb { width: 11px; height: 29px; margin: 4px 0 auto; background: repeating-linear-gradient(#777 0 1px, transparent 1px 3px) 3px 11px / 5px 7px no-repeat, #c6c6c6; }
.grip { display: flex; justify-content: center; flex: none; height: 6px; padding-top: 2px; border-top: 1px solid #b5b5b5; }
.grip span { width: 29px; height: 2px; background: #b2b2b2; }

.strip { flex: none; }
.strip.left { width: 26px; border-right: 2px solid #f2f2f2; padding-top: 2px; background: linear-gradient(#c9c9c9, #e2e2e2); }
.strip.right { width: 31px; border-right: 6px solid #e8e8e8; padding-top: 2px; background: linear-gradient(#cbcbcb, #e6e6e6); }
.side-tab { display: flex; flex-direction: column; align-items: center; justify-content: space-between; font: 10px/14px Lato, "Open Sans", sans-serif; }
.explorer-tab { height: 115px; padding: 2px 0 6px; background: #bcc8e4; border: 1px solid #8fa4d0; border-width: 1px 0; }
.tab-icon { width: 12px; height: 20px; margin-left: 4px; }
.up-text { writing-mode: vertical-rl; transform: rotate(180deg); white-space: nowrap; margin-right: 4px; }
.down-text { writing-mode: vertical-rl; white-space: nowrap; margin-left: 6px; }
.x svg { width: 8px; height: 8px; }
.properties-tab { height: 93px; padding: 3px 0 6px; border-bottom: 1px solid #999; }
.table-icon { width: 20px; height: 17px; }
.command-tab { height: 136px; padding: 4px 0 6px; background: #c2cde6; }
.a-icon { width: 18px; height: 18px; }

/* 3D view */
.viewport { position: relative; flex: 1; min-width: 0; overflow: hidden; }
.scene { width: 100%; height: 100%; }
.compass { font: 700 11px "Open Sans", sans-serif; fill: #333; }
.card {
  position: absolute; bottom: 58px;
  display: flex; align-items: center; justify-content: center;
  height: 92px; border-radius: 6px;
  font: 300 41px/48px Inter, "Open Sans", sans-serif; color: #fff;
}
.red { left: 20px; width: 254px; background: #bf1411; }
.gold { left: 380px; width: 268px; background: #b48a00; color: #fff6cc; font-size: 35px; }
.teal { left: 780px; width: 199px; height: 98px; background: #059b94; color: #e4fffb; font-size: 35px; }

/* command window */
.command { display: flex; flex-direction: column; flex: none; width: 278px; }
.console {
  position: relative; display: flex; flex-direction: column; flex: 1;
  margin: 2px 7px 5px 0;
  border: 1px solid #858585; border-top-color: #ccc;
  background: linear-gradient(#dbdbdb, #e4e4e4 35%, #f6f6f6);
}
.console-main { display: flex; flex: 1; }
.console-text { flex: 1; align-self: flex-end; padding: 0 0 22px 1px; font: 10px/11px Roboto, "Liberation Sans", sans-serif; }
.v-scroll { display: flex; flex-direction: column; align-items: center; width: 17px; padding: 4px 0; gap: 4px; }
.v-scroll svg, .h-scroll svg { width: 8px; height: 8px; }
.v-scroll span { flex: 1; width: 12px; margin-top: 27px; background: linear-gradient(#b0b0b0, #cbcbcb); }
.h-scroll { display: flex; justify-content: space-between; align-items: center; height: 14px; margin-right: 17px; padding: 0 3px; background: #f0f0f0; }
.logo { position: absolute; right: 26px; bottom: 21px; width: 142px; height: 142px; }
.logo-cat { font: 700 46px "DejaVu Sans", sans-serif; fill: #34749c; }
.logo-sub { font: 700 16px "DejaVu Sans", sans-serif; fill: #fff; }

/* status bar */
.status { display: flex; flex: none; height: 19px; border-top: 1px solid #111; background: #f6f6f6; }
.doc-menu { padding: 2px 29px 0 2px; }
.doc-tab { display: flex; align-items: center; gap: 7px; height: 17px; padding: 0 5px 0 3px; background: #cdd6f2; border: solid #6a7696; border-width: 0 1px 1px 0; font: 10px/16px Roboto, "Liberation Sans", sans-serif; }
```
